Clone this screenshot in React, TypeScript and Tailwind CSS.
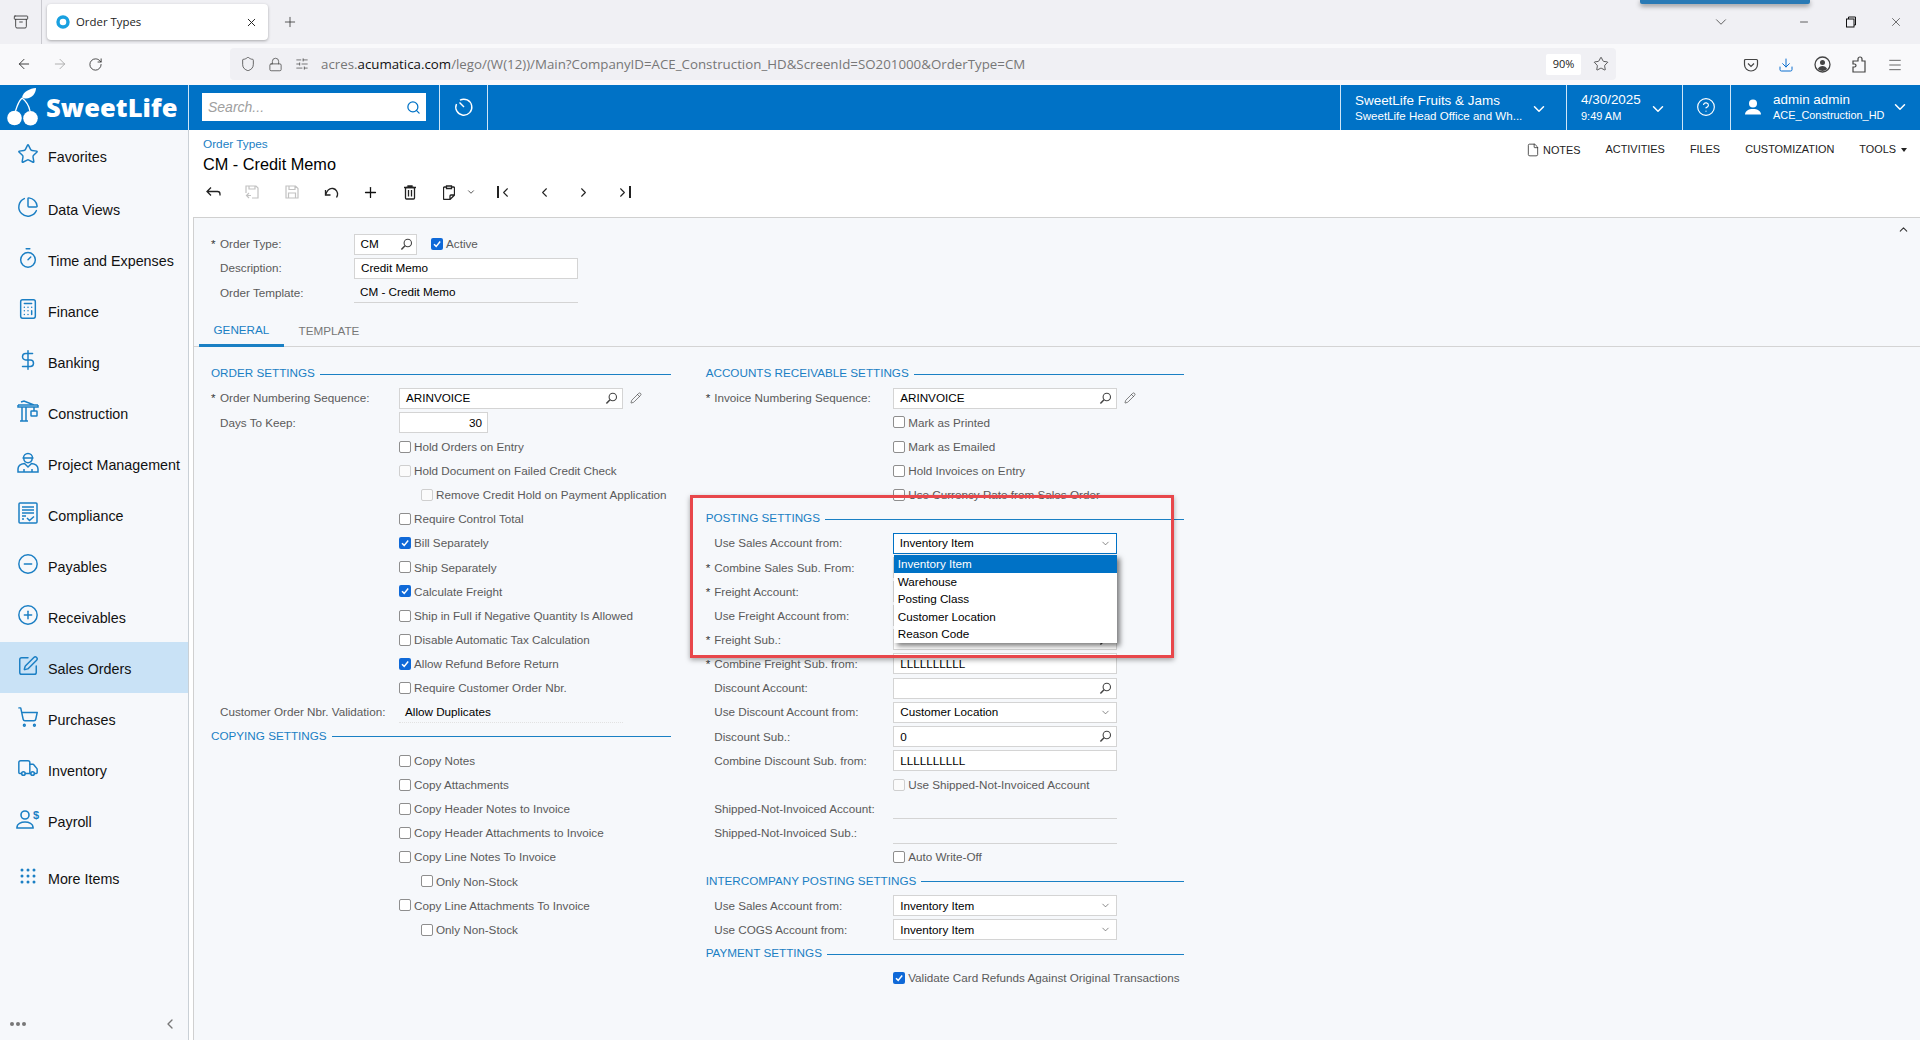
import React, { createContext, useContext } from "react";
import { Star, PieChart, Timer, Calculator, DollarSign, CircleMinus, CirclePlus, SquarePen, ShoppingCart, Truck, ChevronDown, ChevronUp, ChevronLeft, ChevronRight, Search, Pencil, ArrowLeft, ArrowRight, RotateCw, Shield, Lock, SlidersHorizontal, Plus, X, Minus, Menu, Download, Archive, CircleHelp, File } from "lucide-react";

const arial = "font-['Liberation_Sans',Arial,sans-serif]";
const RightCtx = createContext(false);

function Check({ checked, disabled }: { checked?: boolean; disabled?: boolean }) {
  if (checked) {
    return (
      <span className="w-[12px] h-[12px] rounded-[2px] bg-[#0f69d8] shrink-0 flex items-center justify-center">
        <svg width="10" height="10" viewBox="0 0 10 10"><path d="M2 5.2 4.2 7.4 8.2 2.6" fill="none" stroke="#fff" strokeWidth="1.5" /></svg>
      </span>
    );
  }
  return <span className={disabled ? "w-[12px] h-[12px] rounded-[2px] border border-[#cfcfcf] bg-[#fbfbfb] shrink-0" : "w-[12px] h-[12px] rounded-[2px] border border-[#8e8e8e] bg-white shrink-0"} />;
}

function Row({ label, req, children }: { label?: string; req?: boolean; children?: React.ReactNode }) {
  const right = useContext(RightCtx);
  return (
    <div className="flex items-center h-[24.17px]">
      <div className={right ? "w-[187.5px] shrink-0 flex items-center text-[#5a5a5a]" : "w-[188px] shrink-0 flex items-center text-[#5a5a5a]"}>
        <span className={right ? "w-[8.5px] text-[#333] shrink-0" : "w-[9px] text-[#333] shrink-0"}>{req ? "*" : ""}</span>
        <span className="whitespace-nowrap">{label}</span>
      </div>
      {children}
    </div>
  );
}

function Lens() {
  return (
    <svg width="13" height="13" viewBox="0 0 13 13" className="shrink-0"><circle cx="7.8" cy="5" r="3.7" fill="none" stroke="#444" strokeWidth="1.1" /><path d="M5 7.8 1.4 11.6" stroke="#444" strokeWidth="1.5" /></svg>
  );
}

function Box({ value, icon, drop, edit, focus }: { value?: string; icon?: boolean; drop?: boolean; edit?: boolean; focus?: boolean }) {
  return (
    <>
      <div className={focus ? "w-[224px] h-[21px] border border-[#0072c6] bg-white flex items-center pl-[5.5px] pr-[4px] text-black shrink-0" : "w-[224px] h-[21px] border border-[#d4d4d4] bg-white flex items-center pl-[6px] pr-[4px] text-black shrink-0"}>
        <span className="flex-1 whitespace-nowrap">{value}</span>
        {icon && <Lens />}
        {drop && <ChevronDown size={11} strokeWidth={1.5} className="text-[#555] mr-[1px]" />}
      </div>
      {edit && <Pencil size={12} strokeWidth={1.2} className="ml-[7px] text-[#333]" />}
    </>
  );
}

function Cb({ label, checked, disabled, indent }: { label: string; checked?: boolean; disabled?: boolean; indent?: boolean }) {
  return (
    <Row>
      <div className={indent ? "flex items-center pl-[22px]" : "flex items-center"}>
        <Check checked={checked} disabled={disabled} />
        <span className="ml-[3px] text-[#5a5a5a] whitespace-nowrap">{label}</span>
      </div>
    </Row>
  );
}

function Section({ title }: { title: string }) {
  return (
    <div className="flex items-center h-[24.17px] -mt-[1px] mb-[1px]">
      <span className="text-[#1a80c4] text-[11.7px] whitespace-nowrap">{title}</span>
      <span className="flex-1 ml-[5px] h-px bg-[#1a80c4] mt-[3px]" />
    </div>
  );
}

function Ro({ value, dotted }: { value?: string; dotted?: boolean }) {
  return (
    <div className={dotted ? "w-[224px] h-[21px] border-b border-dotted border-[#e2e2e2] flex items-center pl-[6px] text-black" : "w-[224px] h-[21px] border-b border-[#d4d4d4] flex items-center pl-[6px] text-black"}>{value}</div>
  );
}

function Crane() {
  return (
    <svg width="22" height="22" viewBox="0 0 22 22" fill="none" stroke="#1b7fc4" strokeWidth="1.5"><path d="M1 5h20M1 5v2h20V5M4 2l3-1 10 4M5 7v14M9 7v14M3 21h8M17 7v4" /><rect x="14" y="11" width="6" height="5" rx="0.5" /></svg>
  );
}
function Worker() {
  return (
    <svg width="22" height="22" viewBox="0 0 22 22" fill="none" stroke="#1b7fc4" strokeWidth="1.5"><path d="M6.5 7a4.5 4.5 0 0 1 9 0M5.5 7h11M6.8 7.5a4.2 4.2 0 0 0 8.4 0" /><path d="M1 21v-3c0-3 3-5 6.5-5.5L11 16l3.5-3.5C18 13 21 15 21 18v3z" /><path d="M7 21v-3M15 21v-3" /></svg>
  );
}
function Compliance() {
  return (
    <svg width="20" height="22" viewBox="0 0 20 22" fill="none" stroke="#1b7fc4" strokeWidth="1.5"><rect x="1" y="1" width="18" height="20" rx="1" /><path d="M4 5h12M4 8h12M4 11h12M4 14h4M4 17h2M9 16l2.5 2.5 4.5-4" /></svg>
  );
}
function Payroll() {
  return (
    <div className="flex items-start w-[24px] h-[20px] relative">
      <svg width="24" height="20" viewBox="0 0 24 20" fill="none" stroke="#1b7fc4" strokeWidth="1.6"><circle cx="9" cy="6" r="4" /><path d="M1 19v-1c0-3 4-5 8-5s8 2 8 5v1z" /></svg>
      <span className="absolute left-[17px] -top-[2px] text-[#1b7fc4] text-[11px] font-bold">$</span>
    </div>
  );
}
function Dots() {
  return (
    <svg width="16" height="16" viewBox="0 0 16 16" fill="#1b7fc4">
      {[2, 8, 14].map((y) => [2, 8, 14].map((x) => <circle key={`${x}-${y}`} cx={x} cy={y} r="1.5" />))}
    </svg>
  );
}

const ic = { size: 22, strokeWidth: 1.6, color: "#1b7fc4" };
const nav: { label: string; icon: React.ReactNode; cls: string }[] = [
  { label: "Favorites", icon: <Star {...ic} />, cls: "h-[51px]" },
  { label: "Data Views", icon: <PieChart {...ic} />, cls: "h-[51px] mt-[2px]" },
  { label: "Time and Expenses", icon: <Timer {...ic} />, cls: "h-[51px]" },
  { label: "Finance", icon: <Calculator {...ic} />, cls: "h-[51px]" },
  { label: "Banking", icon: <DollarSign {...ic} />, cls: "h-[51px]" },
  { label: "Construction", icon: <Crane />, cls: "h-[51px]" },
  { label: "Project Management", icon: <Worker />, cls: "h-[51px]" },
  { label: "Compliance", icon: <Compliance />, cls: "h-[51px]" },
  { label: "Payables", icon: <CircleMinus {...ic} />, cls: "h-[51px]" },
  { label: "Receivables", icon: <CirclePlus {...ic} />, cls: "h-[51px]" },
  { label: "Sales Orders", icon: <SquarePen {...ic} />, cls: "h-[51px] bg-[#c9e2f6]" },
  { label: "Purchases", icon: <ShoppingCart {...ic} />, cls: "h-[51px]" },
  { label: "Inventory", icon: <Truck {...ic} />, cls: "h-[51px]" },
  { label: "Payroll", icon: <Payroll />, cls: "h-[51px]" },
  { label: "More Items", icon: <Dots />, cls: "h-[51px] mt-[6px]" },
];

function TabStrip() {
  return (
    <div className="h-[44px] bg-[#f0f0f4] flex items-center relative shrink-0 font-['Open_Sans',sans-serif]">
      <div className="w-[42px] h-full flex items-center justify-center border-r border-[#c9c9cf]">
        <Archive size={16} strokeWidth={1.3} className="text-[#333]" />
      </div>
      <div className="ml-[5px] w-[221px] h-[36px] bg-white rounded-[4px] shadow-[0_1px_3px_rgba(0,0,0,0.3)] flex items-center pl-[9px] pr-[10px]">
        <svg width="14" height="16" viewBox="0 0 14 16"><circle cx="7" cy="8" r="5" fill="none" stroke="#19a0e0" strokeWidth="3.4" /></svg>
        <span className="ml-[6px] flex-1 text-[11.4px] text-[#222]">Order Types</span>
        <X size={13} strokeWidth={1.8} className="text-[#222]" />
      </div>
      <Plus size={16} strokeWidth={1.2} className="ml-[14px] text-[#333]" />
      <div className="flex-1" />
      <ChevronDown size={18} strokeWidth={1.1} className="text-[#444] mr-[68px]" />
      <Minus size={12} strokeWidth={1.3} className="text-[#111] mr-[35px]" />
      <svg width="12" height="12" viewBox="0 0 12 12" fill="none" stroke="#111" className="mr-[32px]"><rect x="1.5" y="3" width="7.5" height="8" /><path d="M3.5 3V1h7v8H9" /></svg>
      <X size={14} strokeWidth={1} className="text-[#111] mr-[17px]" />
      <div className="absolute left-[1640px] top-0 w-[170px] h-[4px] bg-[#2a7ab5] rounded-b-[2px] shadow-[0_2px_5px_rgba(0,0,0,0.45)]" />
    </div>
  );
}

function UrlBar() {
  return (
    <div className="h-[40.5px] bg-[#f9f9fb] flex items-center shrink-0 font-['Open_Sans',sans-serif]">
      <ArrowLeft size={16} strokeWidth={1.4} className="ml-[16px] text-[#333]" />
      <ArrowRight size={16} strokeWidth={1.4} className="ml-[20px] text-[#aaa]" />
      <RotateCw size={15} strokeWidth={1.4} className="ml-[20px] text-[#333]" />
      <div className="ml-[127px] w-[1386px] h-[32px] rounded-[4px] bg-[#f0f0f4] flex items-center pl-[10px] pr-[7px]">
        <Shield size={16} strokeWidth={1.2} className="text-[#444]" />
        <Lock size={15} strokeWidth={1.2} className="ml-[12px] text-[#444]" />
        <SlidersHorizontal size={14} strokeWidth={1.2} className="ml-[12px] text-[#444]" />
        <span className="ml-[12px] mt-[1px] text-[13.3px] text-[#777] whitespace-nowrap flex-1">acres.<span className="text-[#111]">acumatica.com</span>/lego/(W(12))/Main?CompanyID=ACE_Construction_HD&amp;ScreenId=SO201000&amp;OrderType=CM</span>
        <span className="w-[35px] h-[21px] bg-white rounded-[2px] flex items-center justify-center text-[11px] text-[#222]">90%</span>
        <Star size={16} strokeWidth={1.2} className="ml-[12px] text-[#333]" />
      </div>
      <div className="ml-[127px] flex items-center text-[#444] mt-[1px]">
        <svg width="16" height="16" viewBox="0 0 16 16" fill="none" stroke="#444" strokeWidth="1.2"><path d="M2.5 2.5h11a1 1 0 0 1 1 1v4a6.5 6.5 0 0 1-13 0v-4a1 1 0 0 1 1-1z" /><path d="M5 6.5l3 3 3-3" /></svg>
        <Download size={16} strokeWidth={1.5} className="ml-[19px] text-[#0b6fd0]" />
        <svg width="17" height="17" viewBox="0 0 17 17" fill="none" stroke="#444" strokeWidth="1.3" className="ml-[20px]"><circle cx="8.5" cy="8.5" r="7.5" /><circle cx="8.5" cy="6.5" r="2.5" fill="#444" stroke="none" /><path d="M3.8 13c1-2 2.7-3 4.7-3s3.7 1 4.7 3a6.5 6.5 0 0 1-9.4 0z" fill="#444" stroke="none" /></svg>
        <svg width="16" height="17" viewBox="0 0 16 17" fill="none" stroke="#444" strokeWidth="1.2" className="ml-[20px]"><path d="M2 16v-5h1.5a1.5 1.5 0 0 0 0-3H2V5h5V3a2 2 0 0 1 4 0v2h3v11z" /></svg>
        <Menu size={16} strokeWidth={1.2} className="ml-[20px]" />
      </div>
    </div>
  );
}

function Header() {
  return (
    <div className={`h-[45.5px] bg-[#0072c6] text-white flex items-stretch shrink-0 ${arial}`}>
      <div className="w-[189px] border-r border-[#cfe6f7] flex items-center pl-[6px] shrink-0">
        <svg width="34" height="42" viewBox="0 0 34 42" fill="#fff">
          <circle cx="8.5" cy="32" r="7.3" /><circle cx="24.5" cy="32.3" r="7.3" />
          <path d="M9.5 25C11 20 13 15 16 12M24 25C23 20 20 15 16 12" fill="none" stroke="#fff" strokeWidth="1.3" />
          <path d="M16 11.5C17 5.5 24 2.5 30 2c0 5-4 10.5-10 10.5-1.5 0-3-.5-4-1z" />
        </svg>
        <span className="ml-[6px] font-['Open_Sans',sans-serif] font-extrabold text-[25.5px] tracking-[0.1px] leading-none">SweetLife</span>
      </div>
      <div className="w-[251px] border-r border-[#cfe6f7] flex items-center pl-[13px] shrink-0">
        <div className="w-[224px] h-[28px] bg-white flex items-center pl-[6px] pr-[5px]">
          <span className="flex-1 italic text-[#a0a0a0] text-[14px]">Search...</span>
          <Search size={15} strokeWidth={2} className="text-[#0072c6]" />
        </div>
      </div>
      <div className="w-[48px] border-r border-[#cfe6f7] flex items-center justify-center shrink-0">
        <svg width="20" height="20" viewBox="0 0 20 20" fill="none" stroke="#fff" strokeWidth="1.4"><path d="M6 3.2A8 8 0 1 1 2.5 7" /><path d="M5.5 5.5 10 10" /></svg>
      </div>
      <div className="flex-1" />
      <div className="w-[226px] border-l border-[#cfe6f7] flex items-center pl-[14px] pr-[16px] shrink-0">
        <div className="flex-1 flex flex-col leading-none mt-[2px]">
          <span className="text-[13.45px] mb-[3px]">SweetLife Fruits &amp; Jams</span>
          <span className="text-[11.55px]">SweetLife Head Office and Wh...</span>
        </div>
        <ChevronDown size={18} strokeWidth={2} className="mr-[2px] mt-[3px]" />
      </div>
      <div className="w-[116px] border-l border-[#cfe6f7] flex items-center pl-[14px] pr-[15px] shrink-0">
        <div className="flex-1 flex flex-col leading-none">
          <span className="text-[13.45px] mb-[5px]">4/30/2025</span>
          <span className="text-[11px]">9:49 AM</span>
        </div>
        <ChevronDown size={18} strokeWidth={2} className="mt-[3px]" />
      </div>
      <div className="w-[48px] border-l border-[#cfe6f7] flex items-center justify-center pr-[1px] shrink-0">
        <CircleHelp size={20} strokeWidth={1.4} />
      </div>
      <div className="w-[190px] border-l border-[#cfe6f7] flex items-center pl-[13px] pr-[11px] shrink-0">
        <svg width="18" height="18" viewBox="0 0 18 18" fill="#fff"><circle cx="9" cy="5.5" r="4" /><path d="M1 16.5c0-3.500 3.500-5.500 8-5.500s8 2 8 5.500z" /></svg>
        <div className="ml-[11px] flex-1 flex flex-col leading-none -mt-[1px]">
          <span className="text-[13.45px] mb-[4px]">admin admin</span>
          <span className="text-[10.9px]">ACE_Construction_HD</span>
        </div>
        <ChevronDown size={18} strokeWidth={2} />
      </div>
    </div>
  );
}

function Sidebar() {
  return (
    <div className="w-[189px] shrink-0 border-r border-[#c9d0d6] bg-[#f6f8fb] flex flex-col text-[14.3px] text-[#111] relative">
      {nav.map((n) => (
        <div key={n.label} className={`flex items-center ${n.cls}`}>
          <div className="w-[48px] flex justify-center items-center pl-[8px] -mt-[4px] shrink-0">
            <div className="w-[40px] flex justify-center">{n.icon}</div>
          </div>
          <span className="whitespace-nowrap mt-[4px]">{n.label}</span>
        </div>
      ))}
      <div className="flex-1" />
      <div className="h-[28px] flex items-center justify-between pl-[10px] pr-[10px] pb-[4px] text-[#777]">
        <div className="flex gap-[2px]">
          <span className="w-[4px] h-[4px] rounded-full bg-[#777]" />
          <span className="w-[4px] h-[4px] rounded-full bg-[#777]" />
          <span className="w-[4px] h-[4px] rounded-full bg-[#777]" />
        </div>
        <ChevronLeft size={16} strokeWidth={2} />
      </div>
    </div>
  );
}

function ToolIcon({ children }: { children: React.ReactNode }) {
  return <div className="w-[39.3px] h-[16px] flex justify-center items-center">{children}</div>;
}

const blk = { fill: "none", stroke: "#222", strokeWidth: 1.3 };
const dim = { fill: "none", stroke: "#c2c2c2", strokeWidth: 1.2 };

function PageHead() {
  return (
    <div className="h-[87px] bg-white shrink-0 flex">
      <div className="flex-1 pl-[14px] pt-[7px]">
        <div className="text-[#1a80c4] text-[11.8px] leading-[14px]">Order Types</div>
        <div className="text-[16.3px] text-black leading-[20px] mt-[3px]">CM - Credit Memo</div>
        <div className="flex items-center mt-[10px] -ml-[9.5px] text-[#222]">
          <ToolIcon><svg width="15" height="12" viewBox="0 0 15 12" {...blk}><path d="M5 1.5 1 5.5l4 4M1 5.5h10.5a2.5 2.5 0 0 1 2.5 2.5v1.500" /></svg></ToolIcon>
          <ToolIcon><svg width="14" height="14" viewBox="0 0 14 14" {...dim}><path d="M3 1h8l2 2v10H7M3 1H1v7M4 1v3h6V1" /><path d="M4 8 1.5 10.5 4 13M1.500 10.500H6" /></svg></ToolIcon>
          <ToolIcon><svg width="14" height="14" viewBox="0 0 14 14" {...dim}><path d="M1 1h9.500L13 3.500V13H1zM4 1v3.500h6V1M3.500 13V8h7v5" /></svg></ToolIcon>
          <ToolIcon><svg width="15" height="13" viewBox="0 0 15 13" {...blk}><path d="M1.500 4v5h5" /><path d="M1.500 9C3 4.500 6 2 9 2.500c3 .5 5 3.500 4.500 6.500-.2 1-.6 1.800-1 2.500" /></svg></ToolIcon>
          <ToolIcon><Plus size={17} strokeWidth={1.8} className="text-[#111]" /></ToolIcon>
          <ToolIcon><svg width="12" height="15" viewBox="0 0 12 15" {...blk}><path d="M0 2.500h12M4 2.500V1h4v1.500" /><rect x="1.5" y="2.5" width="9" height="11.5" rx="1" /><path d="M4.500 5v6.500M7.500 5v6.500" /></svg></ToolIcon>
          <ToolIcon><svg width="12" height="15" viewBox="0 0 12 15" {...blk}><path d="M3.500 2H1.500a1 1 0 0 0-1 1v10.500a1 1 0 0 0 1 1H7l4.500-4.500V3a1 1 0 0 0-1-1h-2M3.500 1h5v2.500h-5zM7 14.500V11a1 1 0 0 1 1-1h3.500" /></svg></ToolIcon>
          <span className="w-[16.7px] flex justify-center -translate-x-[6px]"><ChevronDown size={10} strokeWidth={1.8} /></span>
          <ToolIcon><span className="flex items-center"><span className="w-[1.5px] h-[12px] bg-[#222]" /><ChevronLeft size={15} strokeWidth={1.7} className="-ml-[1px]" /></span></ToolIcon>
          <ToolIcon><ChevronLeft size={15} strokeWidth={1.7} /></ToolIcon>
          <ToolIcon><ChevronRight size={15} strokeWidth={1.7} /></ToolIcon>
          <ToolIcon><span className="flex items-center"><ChevronRight size={15} strokeWidth={1.7} className="-mr-[1px]" /><span className="w-[1.5px] h-[12px] bg-[#222]" /></span></ToolIcon>
        </div>
      </div>
      <div className="flex items-start pt-[13px] pr-[13px] text-[10.9px] text-[#222] gap-[25px] leading-[13px]">
        <span className="flex items-center gap-[3px]"><File size={14} strokeWidth={1.3} />NOTES</span>
        <span>ACTIVITIES</span>
        <span>FILES</span>
        <span>CUSTOMIZATION</span>
        <span className="flex items-center gap-[5px]">TOOLS<span className="w-0 h-0 border-x-[3.5px] border-x-transparent border-t-[4px] border-t-[#222]" /></span>
      </div>
    </div>
  );
}

function LeftCol() {
  return (
    <div className="w-[460px] shrink-0">
      <Section title="ORDER SETTINGS" />
      <Row label="Order Numbering Sequence:" req><Box value="ARINVOICE" icon edit /></Row>
      <Row label="Days To Keep:">
        <div className="w-[89px] h-[21px] border border-[#d4d4d4] bg-white flex items-center justify-end pr-[5px] text-black">30</div>
      </Row>
      <Cb label="Hold Orders on Entry" />
      <Cb label="Hold Document on Failed Credit Check" disabled />
      <Cb label="Remove Credit Hold on Payment Application" disabled indent />
      <Cb label="Require Control Total" />
      <Cb label="Bill Separately" checked />
      <Cb label="Ship Separately" />
      <Cb label="Calculate Freight" checked />
      <Cb label="Ship in Full if Negative Quantity Is Allowed" />
      <Cb label="Disable Automatic Tax Calculation" />
      <Cb label="Allow Refund Before Return" checked />
      <Cb label="Require Customer Order Nbr." />
      <Row label="Customer Order Nbr. Validation:"><Ro value="Allow Duplicates" dotted /></Row>
      <Section title="COPYING SETTINGS" />
      <Cb label="Copy Notes" />
      <Cb label="Copy Attachments" />
      <Cb label="Copy Header Notes to Invoice" />
      <Cb label="Copy Header Attachments to Invoice" />
      <Cb label="Copy Line Notes To Invoice" />
      <Cb label="Only Non-Stock" indent />
      <Cb label="Copy Line Attachments To Invoice" />
      <Cb label="Only Non-Stock" indent />
    </div>
  );
}

function RightCol() {
  const options = ["Warehouse", "Posting Class", "Customer Location", "Reason Code"];
  return (
    <RightCtx.Provider value={true}>
      <div className="w-[478.5px] shrink-0 relative">
        <Section title="ACCOUNTS RECEIVABLE SETTINGS" />
        <Row label="Invoice Numbering Sequence:" req><Box value="ARINVOICE" icon edit /></Row>
        <Cb label="Mark as Printed" />
        <Cb label="Mark as Emailed" />
        <Cb label="Hold Invoices on Entry" />
        <Cb label="Use Currency Rate from Sales Order" />
        <Section title="POSTING SETTINGS" />
        <Row label="Use Sales Account from:"><Box value="Inventory Item" drop focus /></Row>
        <Row label="Combine Sales Sub. From:" req><Box /></Row>
        <Row label="Freight Account:" req><Box icon /></Row>
        <Row label="Use Freight Account from:"><Box drop /></Row>
        <Row label="Freight Sub.:" req><Box icon /></Row>
        <Row label="Combine Freight Sub. from:" req><Box value="LLLLLLLLLL" /></Row>
        <Row label="Discount Account:"><Box icon /></Row>
        <Row label="Use Discount Account from:"><Box value="Customer Location" drop /></Row>
        <Row label="Discount Sub.:"><Box value="0" icon /></Row>
        <Row label="Combine Discount Sub. from:"><Box value="LLLLLLLLLL" /></Row>
        <Cb label="Use Shipped-Not-Invoiced Account" disabled />
        <Row label="Shipped-Not-Invoiced Account:"><Ro /></Row>
        <Row label="Shipped-Not-Invoiced Sub.:"><Ro /></Row>
        <Cb label="Auto Write-Off" />
        <Section title="INTERCOMPANY POSTING SETTINGS" />
        <Row label="Use Sales Account from:"><Box value="Inventory Item" drop /></Row>
        <Row label="Use COGS Account from:"><Box value="Inventory Item" drop /></Row>
        <Section title="PAYMENT SETTINGS" />
        <Cb label="Validate Card Refunds Against Original Transactions" checked />

        <div className="absolute left-[188px] top-[193px] w-[223px] h-[88px] bg-white shadow-[3px_3px_5px_rgba(0,0,0,0.5)] text-black">
          <div className="h-[18px] bg-[#0072c6] text-white pl-[4px] flex items-center">Inventory Item</div>
          {options.map((o) => (
            <div key={o} className="h-[17.5px] pl-[4px] flex items-center">{o}</div>
          ))}
        </div>
        <div className="absolute -left-[16px] top-[133px] w-[484px] h-[163.5px] border-[3px] border-[#e8474b] shadow-[0_2px_5px_rgba(0,0,0,0.35)] pointer-events-none" />
      </div>
    </RightCtx.Provider>
  );
}

function Panel() {
  return (
    <div className="flex-1 ml-[4px] border-l border-t border-[#d0d0d0] bg-[#f6f8fb] relative overflow-hidden">
      <ChevronUp size={13} strokeWidth={2} className="absolute right-[10px] top-[5px] text-[#333]" />
      <div className="pt-[14px] pl-[17px]">
        <Row label="Order Type:" req>
          <div className="-ml-[45px] flex items-center">
            <div className="w-[63px] h-[21px] border border-[#d4d4d4] bg-white flex items-center pl-[5.5px] pr-[3px] text-black">
              <span className="flex-1">CM</span><Lens />
            </div>
            <span className="ml-[14px]"><Check checked /></span>
            <span className="ml-[3px] text-[#5a5a5a]">Active</span>
          </div>
        </Row>
        <Row label="Description:"><div className="-ml-[45px]"><Box value="Credit Memo" /></div></Row>
        <Row label="Order Template:"><div className="-ml-[45px]"><Ro value="CM - Credit Memo" /></div></Row>
      </div>
      <div className="mt-[12.5px] h-[30px] border-b border-[#d4d4d4] pl-[5px] flex items-stretch text-[11.7px]">
        <div className="w-[85px] pl-[14.5px] pb-[2px] flex items-center text-[#1a80c4] border-b-[3px] border-[#1a80c4] -mb-px">GENERAL</div>
        <div className="pl-[14.5px] pb-[2px] flex items-center text-[#777]">TEMPLATE</div>
      </div>
      <div className="pt-[15px] pl-[17px] flex gap-[34.7px]">
        <LeftCol />
        <RightCol />
      </div>
    </div>
  );
}

export default function App() {
  return (
    <div className="w-[1920px] h-[1040px] overflow-hidden flex flex-col bg-white">
      <TabStrip />
      <UrlBar />
      <Header />
      <div className={`flex-1 flex min-h-0 ${arial} text-[11.7px]`}>
        <Sidebar />
        <div className="flex-1 flex flex-col min-w-0">
          <PageHead />
          <Panel />
        </div>
      </div>
    </div>
  );
}
